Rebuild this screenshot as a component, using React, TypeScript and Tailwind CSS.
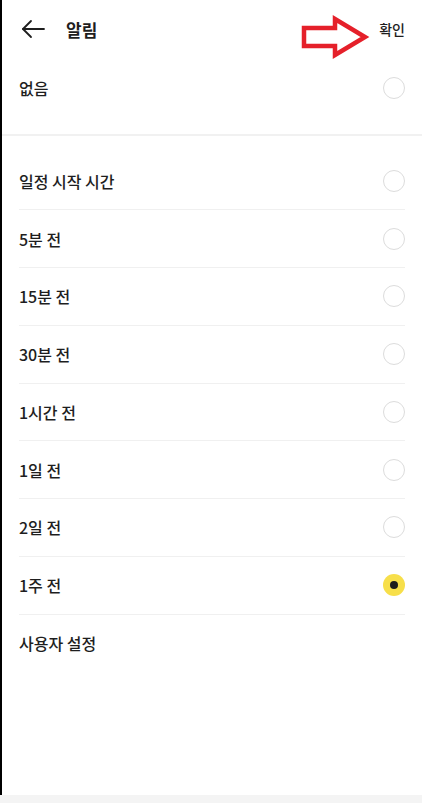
import { useState } from "react";

const options = [
  "일정 시작 시간",
  "5분 전",
  "15분 전",
  "30분 전",
  "1시간 전",
  "1일 전",
  "2일 전",
  "1주 전",
];

function Radio({ checked }: { checked: boolean }) {
  if (checked) {
    return (
      <span className="flex h-[22px] w-[22px] items-center justify-center rounded-full bg-[#f7df4a]">
        <span className="h-[8px] w-[8px] rounded-full bg-[#1c1c1c]" />
      </span>
    );
  }
  return <span className="box-border h-[22px] w-[22px] rounded-full border-[1.5px] border-[#dcdcdc]" />;
}

export default function App() {
  const [selected, setSelected] = useState("1주 전");

  return (
    <div
      className="relative flex h-[803px] w-[422px] flex-col overflow-hidden bg-white text-[#1e1e1e]"
      style={{ fontFamily: '"Noto Sans CJK KR", "Noto Sans", sans-serif' }}
    >
      <div className="flex flex-1 flex-col border-l-2 border-black">
        <header className="flex h-[58px] shrink-0 items-center justify-between pl-[18px] pr-[17px]">
          <div className="flex items-center">
            <svg width="26" height="24" viewBox="0 0 26 24" fill="none" stroke="#1e1e1e" strokeWidth="1.8" strokeLinecap="round" strokeLinejoin="round">
              <path d="M3 12h21" />
              <path d="M11 4l-8 8 8 8" />
            </svg>
            <h1 className="ml-[20px] text-[17px] font-bold leading-none">알림</h1>
          </div>
          <button className="text-[14px] font-medium leading-none">확인</button>
        </header>

        <div className="flex h-[60px] shrink-0 items-center justify-between pl-[17px] pr-[17px]">
          <span className="text-[16px] font-medium">없음</span>
          <Radio checked={selected === "없음"} />
        </div>

        <div className="mt-[16px] h-[1.5px] w-full bg-[#f1f1f1]" />

        <ul className="mt-[17px] pl-[17px] pr-[17px]">
          {options.map((o) => (
            <li
              key={o}
              onClick={() => setSelected(o)}
              className="box-border flex h-[57.75px] items-center justify-between border-b border-[#f0f0f0]"
            >
              <span className="text-[16px] font-medium">{o}</span>
              <Radio checked={selected === o} />
            </li>
          ))}
          <li className="flex h-[57px] items-center">
            <span className="text-[16px] font-medium">사용자 설정</span>
          </li>
        </ul>
      </div>
      <div className="h-[8px] shrink-0 bg-[#f4f4f4]" />

      <svg
        className="absolute left-[300px] top-[15px]"
        width="70"
        height="44"
        viewBox="300 15 70 44"
        fill="none"
        stroke="#e5202a"
        strokeWidth="4.5"
        strokeLinejoin="miter"
      >
        <polygon points="304,28 335,28 335,19 365,37 335,55 335,46 304,46" />
      </svg>
    </div>
  );
}
